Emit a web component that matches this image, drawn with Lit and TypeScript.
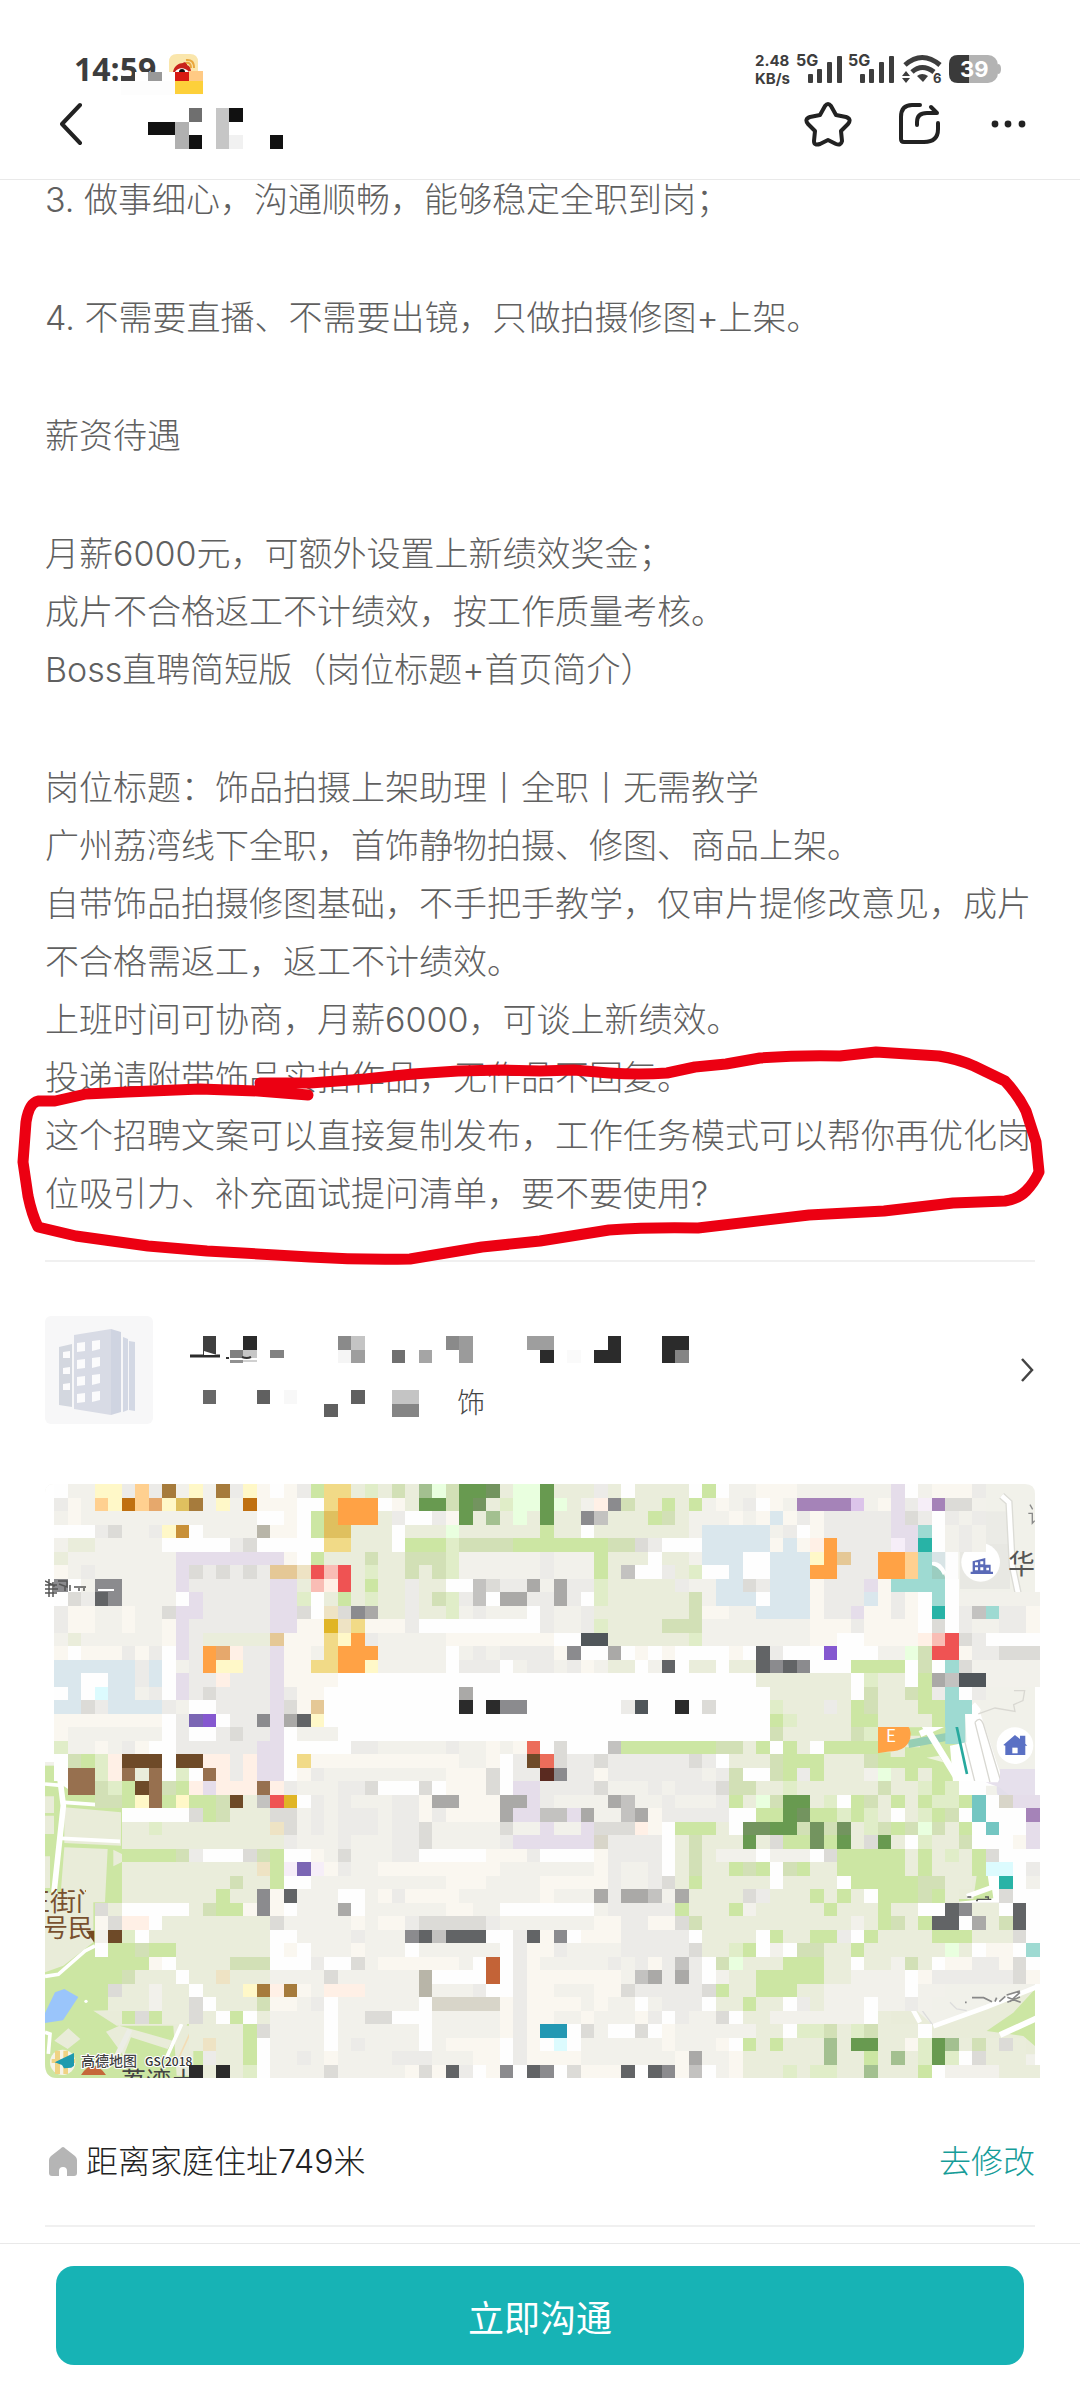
import { LitElement, html, svg, css } from "lit";
import { customElement } from "lit/decorators.js";

const CELL = 13.5;

const PALETTE: Record<string, string> = {
  ".": "#fefefe", a: "#f2f1eb", b: "#faf7f0", c: "#ecebe8", d: "#dcdbd7",
  e: "#eaeddb", f: "#e0edc8", g: "#cce6a3", h: "#d2e0b6", p: "#e5ddea",
  u: "#dae7ed", y: "#fff8c8", Y: "#f1da87", Z: "#dfc05f", O: "#ffa245",
  o: "#ffd090", r: "#ef5353", R: "#f9bdb5", s: "#fff0e6", B: "#c07010",
  n: "#a67b3c", N: "#6e4a28", m: "#97704f", k: "#626466", K: "#2b2b2b",
  q: "#8b8b8e", x: "#aaa9a7", w: "#c3c2c0", D: "#689a50", F: "#73945f",
  G: "#a3c090", t: "#9edad2", T: "#28b3a6", v: "#a583b8", V: "#8558d0",
  P: "#7b66b4", l: "#dcc4ea", L: "#e9ffdf", j: "#dcfbfe", i: "#2398b3",
  J: "#c36337", W: "#50565a", X: "#ec6c5a", S: "#e6a86c", E: "#e5c896",
  C: "#c89038", Q: "#b8b5a8", M: "#e0b526", z: "#d8d5c9", "1": "#eee3c4",
  "2": "#f6eef8", "3": "#74c6c2", "5": "#5a2a20",
};

/* Each row is stored in three stretches; a blank leaves the street drawing visible. */
const TILES: string[][] = [
  [".aayycocnayancyb.bcgYYef", "eheGLhDDFeLLDeeece.eeee.ga", ".aabbbaaaaaaap.abbbc    "],
  ["cbaoyBoSyZnayaBbbb..YOOO", ".beDDhDFefLLDLeasqheegega", "bac.bavvvvlabpc2vdda    "],
  ["abaaaaaaaaaaaaa..b.gZOOO", "ec..cbDeGeLeDeeqweeegheaa", "ababubcbcccccpdc.cac    "],
  ["...cdaacyC.aaaaQbb.gZZee", "e.eeeLeeeeeegee.eeeeeeeau", "uuuuac.bcccccppt.aca    "],
  ["aeeaaaaa.....cd.....YYee", "e.gggfhhhhggggggghhdc...u", "uuuububsOcccc2pT.aca    "],
  ["eaaaaaaaappppppppb.geeeh", "eehhhfaaaaaacaaageee.eeau", "uu..uuuyOEccOOot        "],
  ["bacaaaaaapdcdcdcEE1rRref", "eehehfaaaaaacaaagew..cef.", ".u..uuuOOcccOOot        "],
  ["q.aqqaaaapccccccppeRsreg", "eecee..wdccxaxccfeeeeecaa", "uudcuuubcccpbtttt.      "],
  [".dckqaaaa.pcccccppf.egef", "eecehfcw.xxccxc.feeeeeeha", "uuu.uuubcccubcb.t.aaaaaa"],
  ["cbbaabaadppcccccppd.1dqx", "eeceefacaaa.caaceeeeeeehb", "baauuuubccpbbcb.T.cwtccb"],
  ["cbbaabaabpccccccppbbM1Yb", "bbc.........caacfeeeehhha", "aaaaaaabbbcbbbb.d.caaccb"],
  ["aeaaaaaabpceeeeeEbbbYyOc", "aaaaabbbbbbbb..WWeeeeeefa", "aaaaaaabb..bbbbsRrdc...."],
  ["b.bbbcbc.pcOSsccpbbaYOOO", "aaaaa.acaccccbq..x.b.b...", ".b.kc...V...aaLhrrbccddd"],
  ["uuuuuucu.acOyyccpbbYYOOy", "aaaaa.ccc.accacbaee.ak.ee", ".eekqkq...gggg.h.tdaaaaa"],
  ["uu..uucu.pccscccpbbbb...", ".........................", "...eeeeeee.fee.gxwWWaaaa"],
  [".u.juuac.pcdccccpcbb....", "......x..................", "....eeeeee.heehgct.c    "],
  ["uudcuuuuca..ccccpdbE....", "......K.Kqq.......cW..K.d", "....feeecegheeeggtt     "],
  ["bbbbbbbb.cPV.ccqpxky....", ".........................", "....gfeeeeggeeeegt      "],
  ["baaaaaaa.c..cdccp.aaa...", ".........................", "....heeeeehf            "],
  ["faabacb..ccccccpp.....cc", "aaaaacaababX.d...wggggggg", "hheg.ge.gggg            "],
  [".hgfsNNN.NNsscspp.Ybbbbb", "bbbbbbaab.cNXdccdccccccdc", ".eeehgggeeeh            "],
  [".mmfsmem.f.mscspp.bcaaaa", "aaaaabbbd.cc5qccbccccccca", "ch..hgcgeeeaLegeg       "],
  [" mmhfgNmhgspsssmscaaaccd", "...d.bbbd.ppccccdaaacaccc", "dhheefeeeeeeheefgf..    "],
  ["   hhgymgygghNewrM.cacaa", "accbxxbbbxxpcaaaaxwaacaaa", "cgeLhDDef.ghegegffg3.zpp"],
  ["     .....dgheeeddacaccc", "accbcbbbbxppwwpxaawxbcccc", "c..ggDFggfgfe.efgh.3...v"],
  ["     eefeeeeeeee1dacaccc", "accdaaaaadaapaapdddsb.ggg", "e.FFDDhFhFefhghLheg.3..p"],
  ["     eeeeeeeeeeeecaaacaa", "accdaaaaacppppppzcccc.ehe", "eeDedggFgDedDe.feeh...bp"],
  ["     gggghc...dhg..badaa", "acc.....bbbc....bcccc.ehe", "aaa.aaa.dgggggegefegd..."],
  ["     eeeeeeeeee1g2P2bcaa", "bbbbbbbbbaaaaaaabcaac.ehe", "eghg.hgeegggggegeeegjj.c"],
  ["     eeeeeeeeheeg..aaaaa", "aaaaabbbaaaabbbbbcaacdege", "eeee.eeee.ggggghhee  T.a"],
  ["     eeeeeeegeeqbkaaa..a", "bcbbbbaaaaaabaaaxcxxwaxee", "eedceeegege.ggghge   d.."],
  ["   de.....ehggbqb.aaax.a", "aaaaabbaa.......acccccgee", "egaeeeeegeeegee..kqee.k."],
  ["   bdss.eeeeeeeedaaaaaba", "bbcdddddcaaaaaaabbccbbdhe", "eeeeeeeeeeaeghegkk.xehk."],
  ["   aNf.eeeeeeeee..aaaaca", "aaqkwkkk..ckbq.bbbccccc.e", "eee.geeggc.geeeegggeeed."],
  ["   .gghggeeeeeee.b.aaaba", "aa.aaaaaa.cbbcaaaacccccde", "efg.a.hheegeeeeeeLe.bb.t"],
  ["   ggggb.eeeehhh...c..da", "bbbbbba.J.cbaaaaacacbcwc.", "hLeeegggee.eeahe.bbccbd."],
  ["   ggheee.ee1eeeaaaadaaa", "aaaQ....J.cbbbbbbbawxcxc.", "aeegggggeeaaaa.bccccccdb"],
  ["    deeaee.eeeynsnbasssa", "aaaQaaac..cbbaaabbdcccccd", "geegggeeaaaaaa.aa       "],
  ["    eeeaeed.eeehbbac.aaa", "aaa.zzzzzbcbbbbabaa.accc.", "eegee.ceaaa.aaca        "],
  ["     gdgeede.g.eaaaa.aad", "d...aaaaabcbbaabaaabc.caa", "d.eeaaaaaaa.e           "],
  ["          eeeegdaaaa.aaa", "aaa.aaaaabcbii.da..d.baaa", "aaaee.ffhefheee.        "],
  ["          e1eeg.aaaa.aca", "aaa.abbbb.cb.j.aaaaaabaaa", "b.gegeeeGeDDeebfDGehede "],
  ["           ceeg.aacabaaa", "acccaaabb.cbbbbaaaaaaabxa", "abeeeeeeGeegeGefDf.deee "],
  ["          KeKef.aaaadaaa", "aabdbkc.bq.kq.dbbbk.kqbw.", "abeeefeffeeGeeeg.aaaaeee"],
];

type Block = [number, number, number, number, string];

/** Joins equal neighbours of every row into single blocks. */
const mapBlocks = (): Block[] => {
  const out: Block[] = [];
  TILES.forEach(([west, middle, east], row) => {
    const line = west + middle.slice(0, 25) + east;
    let start = 0;
    for (let i = 1; i <= line.length; i++) {
      if (line[i] !== line[start]) {
        if (line[start] !== " ") out.push([start, row, i - start, 1, PALETTE[line[start]]]);
        start = i;
      }
    }
  });
  return out;
};

const drawBlocks = (blocks: Block[], dx = 0) =>
  blocks.map(([x, y, w, h, fill]) => svg`<rect x=${dx + x * CELL} y=${y * CELL}
    width=${w * CELL} height=${h * CELL} fill=${fill}></rect>`);

const TITLE: Block[] = [
  [3, 0, 1, 1, "#6f6f6f"], [5, 0, 1, 3, "#c6c6c6"], [6, 0, 1, 1, "#111"],
  [0, 1, 2, 1, "#111"], [2, 1, 1, 2, "#b0b0b0"], [3, 2, 1, 1, "#111"],
  [6, 2, 1, 1, "#f1f1f1"], [9, 2, 1, 1, "#111"],
];

const COMPANY: Block[] = [
  [1, 0, 1, 1.4, "#3f3f3f"], [4, 0, 1, 1, "#2b2b2b"], [11, 0, 1, 1, "#8a8a8a"],
  [12, 0, 1, 1, "#c4c4c4"], [19, 0, 1, 1, "#8a8a8a"], [20, 0, 1, 2, "#9b9b9b"],
  [25, 0, 2, 1, "#9e9e9e"], [31, 0, 1, 2, "#2b2b2b"], [35, 0, 2, 1, "#2b2b2b"],
  [3, 1, 1, 0.6, "#808080"], [4, 1, 1, 0.6, "#c6c6c6"], [6, 1, 1, 0.65, "#828282"],
  [3, 1.8, 1, 0.2, "#909090"], [4, 1.8, 1, 0.15, "#d0d0d0"],
  [11, 1, 1, 1, "#f5f5f5"], [12, 1, 1, 1, "#9e9e9e"], [15, 1, 1, 1, "#707070"],
  [17, 1, 1, 1, "#a5a5a5"], [26, 1, 1, 1, "#2b2b2b"], [28, 1, 1, 1, "#fafafa"],
  [30, 1, 1, 1, "#2b2b2b"], [35, 1, 1, 1, "#2b2b2b"], [36, 1, 1, 1, "#858585"],
  [1, 4, 1, 1, "#686868"], [5, 4, 1, 1, "#606060"], [7, 4, 1, 1, "#f8f8f8"],
  [12, 4, 1, 1, "#606060"], [15, 4, 2, 1, "#c4c4c4"],
  [10, 5, 1, 1, "#606060"], [15, 5, 2, 1, "#858585"],
];

const PARAGRAPHS: string[][] = [
  ["3. 做事细心，沟通顺畅，能够稳定全职到岗；"],
  ["4. 不需要直播、不需要出镜，只做拍摄修图+上架。"],
  ["薪资待遇"],
  ["月薪6000元，可额外设置上新绩效奖金；", "成片不合格返工不计绩效，按工作质量考核。", "Boss直聘简短版（岗位标题+首页简介）"],
  [
    "岗位标题：饰品拍摄上架助理丨全职丨无需教学",
    "广州荔湾线下全职，首饰静物拍摄、修图、商品上架。",
    "自带饰品拍摄修图基础，不手把手教学，仅审片提修改意见，成片不合格需返工，返工不计绩效。",
    "上班时间可协商，月薪6000，可谈上新绩效。",
    "投递请附带饰品实拍作品，无作品不回复。",
    "这个招聘文案可以直接复制发布，工作任务模式可以帮你再优化岗位吸引力、补充面试提问清单，要不要使用?",
  ],
];

@customElement("status-bar")
class StatusBar extends LitElement {
  static styles = css`
    :host { display: flex; align-items: flex-start; justify-content: space-between;
      height: 43px; padding: 52px 78px 0 74px; color: #3d3d3d;
      font-family: Inter, "Noto Sans CJK SC", sans-serif; font-weight: 700; }
    .left, .right { display: flex; align-items: flex-start; }
    .right { gap: 5px; }
    .clock { position: relative; width: 88px; font: 700 32px/34px "Open Sans", Inter, sans-serif; }
    .cover { position: absolute; left: 0; top: 0; }
    .rate { width: 36px; font-size: 15px; line-height: 18px; text-align: left; white-space: nowrap; }
    .wifi { margin: 0 2px; }
    svg { display: block; }
  `;

  private signal() {
    return svg`<svg width="47" height="33" viewBox="0 0 47 33">
      <text x="0" y="14" font-size="16" font-weight="700" fill="#3d3d3d">5G</text>
      <g fill="#3d3d3d"><rect x="12" y="22" width="5" height="9" rx="1"/><rect x="21" y="17" width="5" height="14" rx="1"/>
      <rect x="31" y="10" width="5" height="21" rx="1"/><rect x="41" y="4" width="5" height="27" rx="1"/></g></svg>`;
  }

  render() {
    return html`
      <div class="left">
        <div class="clock"><span>14:59</span>
          <svg class="cover" width="130" height="43" viewBox="74 52 130 43" aria-hidden="true">
            <rect x="135" y="72" width="68" height="9" fill="#fff"/>
            <rect x="121" y="81" width="82" height="14" fill="#fdfdfd"/>
            <rect x="121" y="76" width="14" height="5" fill="#404040"/>
            <rect x="148" y="72" width="14" height="9" fill="#999"/>
            <path d="M169 72V62q0-8 8-8h13q8 0 8 8v10z" fill="#fae6ac"/>
            <path d="M173 72c1-6 6-9 10-9 1-2 5 0 4 2 3 1 4 4 4 7z" fill="#c9221c"/>
            <path d="M175 72c3-5 10-5 14 0z" fill="#fff"/><circle cx="182" cy="72" r="3" fill="#111"/>
            <path d="M186 63q5-1 5 5M186 60q8-1 8 8" fill="none" stroke="#e9a63c" stroke-width="2"/>
            <rect x="175" y="72" width="14" height="9" fill="#d71a12"/>
            <rect x="189" y="71" width="14" height="10" fill="#ffca84"/>
            <rect x="175" y="81" width="28" height="13" fill="#fdd03a"/>
          </svg>
        </div>
      </div>
      <div class="right">
        <div class="rate">2.48<br />KB/s</div>
        ${this.signal()}${this.signal()}
        <svg class="wifi" width="40" height="33" viewBox="0 0 40 33">
          <g fill="none" stroke="#3d3d3d" stroke-width="5"><path d="M3 13Q20-2 38 13"/><path d="M10 20Q20 11 32 20"/></g>
          <path d="M15 24q5-4 11 0l-5 6z" fill="#3d3d3d"/><path d="M0 24l4-5 4 5zM0 26l4 5 4-5z" fill="#3d3d3d"/>
          <text x="31" y="31" font-size="13" font-weight="700" fill="#3d3d3d">6</text>
        </svg>
        <svg width="53" height="33" viewBox="0 0 53 33">
          <rect x="0" y="3" width="49" height="28" rx="10" fill="#b3b3b3"/><path d="M49 12q3 0 3 5t-3 5z" fill="#b3b3b3"/>
          <path d="M20 3H9q-9 0-9 9v10q0 9 9 9h11z" fill="#3a3a3a"/>
          <text x="11" y="25" font-size="22" font-weight="700" fill="#fff">39</text>
        </svg>
      </div>`;
  }
}

@customElement("title-bar")
class TitleBar extends LitElement {
  static styles = css`
    :host { display: flex; align-items: flex-start; height: 84px; padding: 0 50px; border-bottom: 1px solid #e9e9e9; }
    button { all: unset; display: block; cursor: pointer; }
    svg { display: block; }
    .back { padding: 4px 10px; }
    .title { margin: 13px auto 0 46px; }
    .actions { display: flex; gap: 42px; }
  `;
  render() {
    return html`
      <button class="back" aria-label="返回"><svg width="32" height="50" viewBox="0 0 32 50">
        <path d="M20 6L2 25l18 19" fill="none" stroke="#222" stroke-width="4" stroke-linecap="round" stroke-linejoin="round"/></svg></button>
      <svg class="title" width="136" height="41" viewBox="0 0 136 41" shape-rendering="crispEdges">${drawBlocks(TITLE)}</svg>
      <div class="actions">
        <button aria-label="收藏"><svg width="50" height="58" viewBox="0 0 50 58">
          <path d="M23 11q3-4 6 0l5 9 10 2q6 2 2 7l-7 7 1 10q-1 5-6 3l-8-4-8 4q-6 2-6-3l1-10-7-7q-4-5 2-7l10-2z" fill="none" stroke="#222" stroke-width="4" stroke-linejoin="round"/></svg></button>
        <button aria-label="分享"><svg width="50" height="58" viewBox="0 0 50 58">
          <g fill="none" stroke="#222" stroke-width="4" stroke-linecap="round" stroke-linejoin="round">
          <path d="M26 10H18Q7 10 7 22v22q0 3 3 3h20q14 0 14-13v-6"/><path d="M23 30v-3q0-9 10-9h10l-6-6"/></g></svg></button>
        <button aria-label="更多"><svg width="44" height="58" viewBox="0 0 44 58">
          <g fill="#222"><circle cx="9" cy="29" r="3.4"/><circle cx="22" cy="29" r="3.4"/><circle cx="36" cy="29" r="3.4"/></g></svg></button>
      </div>`;
  }
}

@customElement("job-description")
class JobDescription extends LitElement {
  static styles = css`
    :host { display: block; position: relative; margin-top: -9px; padding: 0 45px; }
    .text { display: flex; flex-direction: column; gap: 60px; padding-bottom: 37px; border-bottom: 2px solid #f0f0f0;
      color: #606060; font: 300 34px/58px Inter, "Noto Sans CJK SC", sans-serif; }
    p { margin: 0; line-break: strict; }
    .mark { position: absolute; left: 0; bottom: -12px; width: 100%; height: auto; pointer-events: none; }
  `;
  render() {
    return html`
      <div class="text">${PARAGRAPHS.map((lines) => html`<section>${lines.map((l) => html`<p>${l}</p>`)}</section>`)}</div>
      <svg class="mark" viewBox="0 1040 1080 235" aria-hidden="true">
        <path fill="none" stroke="#ec0012" stroke-width="11" stroke-linecap="round" stroke-linejoin="round"
          d="M260 1084L310 1084 365 1080 413 1075 458 1072 503 1071 540 1072 574 1071 609 1074Q640 1076 667 1074L695 1068 726 1065 760 1059Q800 1056 840 1057L876 1053 939 1057Q958 1060 974 1067L1005 1082Q1018 1096 1026 1112L1036 1143 1039 1173Q1034 1184 1026 1192 1018 1200 1005 1202L953 1204 884 1212 809 1216 698 1229Q650 1228 609 1231L540 1242 482 1248 410 1260Q360 1261 310 1258L207 1252 148 1247 76 1237 38 1228Q32 1216 28 1197L23 1163 26 1123Q29 1104 38 1102L55 1102 86 1095 127 1093 200 1090 258 1092 308 1096"/>
      </svg>`;
  }
}

@customElement("company-card")
class CompanyCard extends LitElement {
  static styles = css`
    :host { display: block; padding: 54px 45px 60px; }
    a { display: flex; align-items: center; color: inherit; text-decoration: none; }
    svg { display: block; }
    .name { margin: 0 auto 0 36px; }
  `;
  private windows() {
    const rows = [26, 43, 60, 77];
    return [
      ...rows.map((y) => svg`<path d=${`M32 ${y + 1}l8-1v9l-8 1z`} />`),
      ...rows.map((y) => svg`<path d=${`M47 ${y - 1}l8-1v9l-8 2z`} />`),
      ...[36, 52, 68].map((y) => svg`<path d=${`M18 ${y}l7-1v7h-7z`} />`),
    ];
  }
  render() {
    return html`<a href="#company" aria-label="公司信息">
      <svg width="108" height="108" viewBox="0 0 108 108">
        <rect width="108" height="108" rx="6" fill="#f7f7f8"/>
        <path d="M14 31l13-3v63l-13-2z" fill="#d3d7df"/><path d="M29 19l37-6v86l-37-6z" fill="#d8dbe5"/>
        <path d="M66 13l10 3v80l-10 3z" fill="#cfd4e1"/><path d="M78 21l5 2v71l-5 2zM84 25l6 1v69l-6-1z" fill="#d3d8e4"/>
        <g fill="#fbfbfc">${this.windows()}</g>
      </svg>
      <svg class="name" width="500" height="96" viewBox="0 -14 500 96">
        <g shape-rendering="crispEdges">${drawBlocks(COMPANY)}</g>
        <path d="M1 20H31" stroke="#2b2b2b" stroke-width="3"/><path d="M15 15l13 4H15z" fill="#fff"/>
        <path d="M37 22h3M53 21q5 2 9 0" stroke="#333" stroke-width="2" fill="none"/>
        <text x="268" y="77" font-family="Noto Sans CJK SC, sans-serif" font-size="28" font-weight="300" fill="#444">饰</text>
      </svg>
      <svg width="16" height="30" viewBox="0 0 16 30"><path d="M3 4l10 11L3 26" fill="none" stroke="#444" stroke-width="2.5"/></svg>
    </a>`;
  }
}

@customElement("area-map")
class AreaMap extends LitElement {
  static styles = css`
    :host { display: block; padding: 0 40px 0 45px; }
    .map { display: block; width: 100%; height: auto; }
    text { font-family: "Noto Sans CJK SC", sans-serif; }
  `;
  render() {
    return html`<svg class="map" viewBox="0 0 995 594" role="img" aria-label="地图">
      <defs>
        <clipPath id="frame"><path d="M9 0H980q10 0 10 10V594H12Q0 594 0 580V9Q0 0 9 0z"/></clipPath>
        <clipPath id="street"><rect x="0" y="400" width="41" height="60"/></clipPath>
      </defs>
      <g clip-path="url(#frame)">
        <rect width="995" height="594" fill="#f1f1ea"/>
        <rect width="10" height="278" fill="#fff"/>
        <g transform="translate(-15 295) scale(.3333)">
          <rect x="40" y="-40" width="500" height="950" fill="#cce6a3"/>
          <g fill="#e9ecd9"><path d="M103 85l170 15v100l-170-8zM103 205l130 5-8 160H90zM45 52h27v50H45zM45 110h27v55H45zM45 232h15v95H45zM45 340l145 10v140l-90 70-55 20zM250 212l50 25-50 25z"/>
          <path d="M190 695l300-10-20 55H260zM115 748l36 32-38 30-40-25zM228 758l40-18 160 45-15 25-110-35-22 55zM430 740h60v150h-50z"/></g>
          <g fill="none" stroke="#fff"><path d="M85-40l15 120-28 260" stroke-width="17"/><path d="M103 70l95 7M95 178l175 9" stroke-width="11"/>
            <path d="M45 592l40-6 80-70 30-15M455 735l-45 100M45 760l15 5-5 60M45 15l55 5" stroke-width="11"/></g>
          <path d="M300 752l-40 80" stroke="#ecede6" stroke-width="16"/><path d="M495 730l-50 110" stroke="#f3ddb5" stroke-width="5"/>
          <path d="M75 640l28-10 42 24-46 70-54 8v-30z" fill="#9ac5fb"/><circle cx="168" cy="667" r="5" fill="#fff"/>
          <path d="M120-22h73v66l-50-5q-30-30-35-60z" fill="#976941"/>
          <path d="M72-10h45l5 45-30-20z" fill="#fff"/><path d="M168 455h25v36z" fill="#764820"/>
          <circle cx="98" cy="850" r="38" fill="#f5f3e7"/><path d="M75 815h15v70H75zM100 815h14v70h-14zM65 840h70v12H65z" fill="#efd384"/>
          <path d="M132 822l-58 28 22 8 6 10 22-2 8-6z" fill="#1e9aae"/>
          <path d="M153 888q36-55 75 0z" fill="#c5683a"/>
        </g>
        <g clip-path="url(#street)" fill="#79512f" font-size="26"><text x="-21" y="427">正街门</text></g>
        <text x="-2" y="453" font-size="25" fill="#79512f">号民</text>
        <text x="76" y="606" font-size="25" fill="#444">荔湾土</text>
        <text x="36" y="582" font-size="14" font-weight="500" fill="#444" stroke="#fff" stroke-width="2" paint-order="stroke">高德地图</text>
        <text x="100" y="582" font-size="12" font-weight="500" fill="#333" stroke="#fff" stroke-width="2" paint-order="stroke">GS(2018</text>

        <g transform="translate(675 -15) scale(.3333)">
          <rect x="756" y="127" width="110" height="110" fill="#ebebe6"/>
          <rect x="720" y="225" width="150" height="135" fill="#e8e8e3"/>
          <g fill="none"><path d="M845 80l22 20 10 190 20 95" stroke="#dcdcd6" stroke-width="22"/><path d="M845 80l22 20 10 190 20 95" stroke="#fff" stroke-width="14"/></g>
          <rect x="675" y="245" width="40" height="125" fill="#fdfdfd"/>
          <path d="M634 247h42v60l-42 25z" fill="#d8e4e6"/><path d="M634 288q25-5 41 35v50h-41z" fill="#9bcdc0"/>
          <path d="M634 280q25-8 45 30l-10 8q-10-25-35-30z" fill="#fff"/>
          <circle cx="782" cy="280" r="58" fill="#fff"/>
          <path d="M752 308h6v-31l38-10v20h16v21h7v7h-67z" fill="#5a6ab8"/>
          <path d="M765 280h9v9h-9zM781 277h9v9h-9zM765 295h9v9h-9zM781 295h9v9h-9zM799 296h8v8h-8z" fill="#fff"/>
          <path d="M930 107l8 14M925 133h12v30l7-8" stroke="#888" stroke-width="4" fill="none"/>
          <rect x="470" y="774" width="250" height="170" fill="#cce6a3"/>
          <path d="M470 774h130v90h-130z" fill="#e9ecd9"/><path d="M565 775h35v25h-35zM555 835h120v100h-120zM472 850h40v50h-40z" fill="#cce6a3"/>
          <path d="M565 825l120-22" stroke="#96ceb4" stroke-width="24"/>
          <path d="M600 795l75-33M612 765l110 180" stroke="#fff" stroke-width="20"/><path d="M620 866l38-6 12 20z" fill="#eef3df"/>
          <rect x="676" y="735" width="60" height="90" fill="#9edad2"/>
          <path d="M735 730l30-30 190 230v20H700l-10-120 50-10z" fill="#fff"/>
          <path d="M800 650h160v290H850l-70-210z" fill="#f1f1ea"/>
          <path d="M765 760q15-20 25 5l55 180M765 760l45 180M735 820l30 120M775 735l50-18 60 10-4-20 28-12 5-30h-32" stroke="#d9d8d2" stroke-width="4" fill="none"/>
          <path d="M703 740l38 175" stroke="#28a99e" stroke-width="8"/>
          <path d="M472 773h40q60-20 60 20 0 55-70 55l-30 5z" fill="#ffa245"/>
          <circle cx="885" cy="830" r="55" fill="#fff"/>
          <path d="M850 828l35-30 15 12v-10h16v24l6 6h-6v28h-60v-28z" fill="#5a70c4"/><path d="M877 836h16v17h-16z" fill="#fff"/>
          <ellipse cx="885" cy="960" rx="55" ry="55" fill="#e2deea"/>
        </g>
        <text x="841" y="258" font-size="17" fill="#fff">E</text>
        <text x="963" y="90" font-size="27" fill="#555">华</text>

        <g transform="translate(675 295) scale(.3333)">
          <path d="M796 10h44v-40h120v80l-84 5-38-30z" fill="#e6e0ec"/>
          <rect x="715" y="208" width="180" height="162" fill="#fff"/><path d="M715 208h85l20 150-105 10z" fill="#cce6a3"/>
          <path d="M770 290l-10 70h-50v-70z" fill="#e9ecd9"/>
          <path d="M808 270l8 55-75 27" stroke="#fff" stroke-width="15" fill="none"/>
          <path d="M742 354h12M768 365h4v-4h42M795 354h10v8" stroke="#555" stroke-width="4" fill="none"/>
          <path d="M472 696h120l50 45 303-115v200H472z" fill="#e9ecd9"/>
          <path d="M800 756l80-55 65-70v170l-35-30z" fill="#cce6a3"/>
          <g stroke="#fff" fill="none"><path d="M640 742l160-58 150-60" stroke-width="14"/><path d="M840 768l110-50" stroke-width="18"/><path d="M575 685l25 45" stroke-width="14"/></g>
          <path d="M603 690l35 48M690 670l20 20 30 5" stroke="#ddd" stroke-width="4" fill="none"/>
          <path d="M756 656h35l25 12M735 670h5M825 668l5-12M838 668l18-16M860 648l40-12M870 668l30-28M862 655l40 15M862 670l38-16" stroke="#888" stroke-width="5" fill="none"/>
        </g>
      </g>
      <g shape-rendering="crispEdges">${drawBlocks(mapBlocks(), 9)}</g>
      <g stroke="#555" stroke-width="1.5" fill="none"><path d="M0 97l10 5M0 101h12M0 105h13M0 109h12M4 95v18M8 98v15M13 97h9v6l-8-3"/>
        <path d="M20 103v4M25 101v6M29 103h12M34 104v3M39 104v3"/></g>
      <path d="M53 106h16" stroke="#fff" stroke-width="2"/>
    </svg>`;
  }
}

@customElement("app-root")
class AppRoot extends LitElement {
  static styles = css`
    :host { display: block; min-height: 100vh; background: #fff; font-family: Inter, "Noto Sans CJK SC", sans-serif; }
    .distance { display: flex; align-items: center; margin: 0 45px 16px; padding: 61px 0 41px; border-bottom: 2px solid #f0f0f0;
      font-size: 32px; line-height: 45px; font-weight: 300; color: #222; }
    .home { display: block; margin: 0 8px 0 3px; }
    .distance a { margin-left: auto; color: #159c98; text-decoration: none; }
    .bar { padding: 22px 56px 34px; border-top: 1px solid #e9e9e9; }
    .chat { display: block; width: 100%; height: 99px; border: 0; border-radius: 18px; background: #17b3b5; color: #fff;
      font: 400 36px/50px "Noto Sans CJK SC", sans-serif; cursor: pointer; }
  `;
  render() {
    return html`
      <header><status-bar></status-bar><title-bar></title-bar></header>
      <main>
        <job-description></job-description>
        <company-card></company-card>
        <area-map></area-map>
        <div class="distance">
          <svg class="home" width="30" height="32" viewBox="0 0 30 32"><path d="M15 1q1 0 3 2l9 7q2 2 2 4v13q0 3-3 3h-7v-5q0-4-4-4t-4 4v5H4q-3 0-3-3V14q0-2 2-4l9-7q2-2 3-2z" fill="#b5b5b5"/></svg>
          <span>距离家庭住址749米</span><a href="#address">去修改</a>
        </div>
      </main>
      <footer class="bar"><button class="chat">立即沟通</button></footer>`;
  }
}
